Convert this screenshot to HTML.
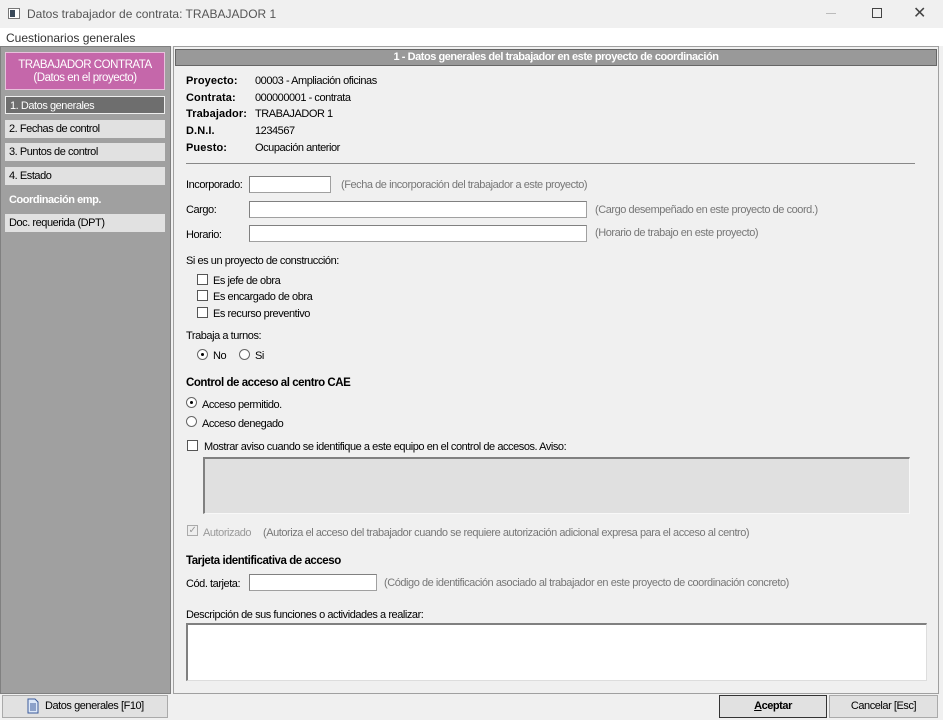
<!DOCTYPE html>
<html><head><meta charset="utf-8">
<style>
*{margin:0;padding:0;box-sizing:border-box}
body{width:943px;height:720px;overflow:hidden;background:#f0f0f0;font-family:"Liberation Sans",sans-serif;font-size:11px;color:#000;position:relative;letter-spacing:-0.45px}
.a{position:absolute;white-space:nowrap}
.g{color:#777}
.inp{position:absolute;background:#fff;border:1px solid #a0a0a0;border-top-color:#808080;border-left-color:#808080}
.cb{position:absolute;width:11px;height:11px;border:1px solid #555;background:#fff}
.rb{position:absolute;width:11px;height:11px;border:1px solid #666;border-radius:50%;background:#fff}
.rb.on::after{content:"";position:absolute;left:3px;top:3px;width:3px;height:3px;border-radius:50%;background:#000}
.nav{position:absolute;left:5px;width:160px;height:18px;background:#e1e1e1;padding-left:4px;line-height:18px}
b{font-weight:bold;letter-spacing:0.1px}
</style></head><body>
<div class="a" style="left:0;top:0;width:943px;height:28px;background:#f0f0f0"></div>
<div class="a" style="left:8px;top:8px;width:12px;height:11px;border:1px solid #777;background:#fff"><div style="position:absolute;left:1px;top:1px;width:5px;height:7px;background:#3a4a5a"></div></div>
<div class="a" style="left:27px;top:7px;font-size:12px;color:#555;letter-spacing:0">Datos trabajador de contrata: TRABAJADOR 1</div>
<div class="a" style="left:826px;top:13px;width:10px;height:1px;background:#bbb"></div>
<div class="a" style="left:872px;top:8px;width:10px;height:10px;border:1px solid #444"></div>
<div class="a" style="left:913px;top:3px;font-size:16px;color:#444;letter-spacing:0">✕</div>
<div class="a" style="left:0;top:28px;width:943px;height:18px;background:#fff"></div>
<div class="a" style="left:6px;top:31px;font-size:12px;color:#333;letter-spacing:0">Cuestionarios generales</div>
<div class="a" style="left:0;top:46px;width:171px;height:648px;background:#a0a0a0;border:1px solid #808080"></div>
<div class="a" style="left:5px;top:52px;width:160px;height:38px;background:#c567aa;border:1px solid #e8c0dc;color:#fff;text-align:center;line-height:13px;padding-top:6px;font-size:11.5px">TRABAJADOR CONTRATA<br>(Datos en el proyecto)</div>
<div class="nav" style="top:96px;background:#6e6e6e;color:#fff;border:1px solid #eee">1. Datos generales</div>
<div class="nav" style="top:120px">2. Fechas de control</div>
<div class="nav" style="top:143px">3. Puntos de control</div>
<div class="nav" style="top:167px">4. Estado</div>
<div class="a" style="left:9px;top:194px;color:#fff;font-weight:bold">Coordinación emp.</div>
<div class="nav" style="top:214px">Doc. requerida (DPT)</div>
<div class="a" style="left:173px;top:46px;width:766px;height:648px;background:#f0f0f0;border:1px solid #a0a0a0"></div>
<div class="a" style="left:175px;top:49px;width:762px;height:17px;background:#999;border:1px solid #666;color:#fff;font-weight:bold;text-align:center;line-height:15px">1 - Datos generales del trabajador en este proyecto de coordinación</div>
<div class="a" style="left:186px;top:75px"><b>Proyecto:</b></div><div class="a" style="left:255px;top:75px">00003 - Ampliación oficinas</div>
<div class="a" style="left:186px;top:92px"><b>Contrata:</b></div><div class="a" style="left:255px;top:92px">000000001 - contrata</div>
<div class="a" style="left:186px;top:108px"><b>Trabajador:</b></div><div class="a" style="left:255px;top:108px">TRABAJADOR 1</div>
<div class="a" style="left:186px;top:125px"><b>D.N.I.</b></div><div class="a" style="left:255px;top:125px">1234567</div>
<div class="a" style="left:186px;top:142px"><b>Puesto:</b></div><div class="a" style="left:255px;top:142px">Ocupación anterior</div>
<div class="a" style="left:186px;top:163px;width:729px;height:1px;background:#888"></div>
<div class="a" style="left:186px;top:179px">Incorporado:</div>
<div class="inp" style="left:249px;top:176px;width:82px;height:17px"></div>
<div class="a g" style="left:341px;top:179px">(Fecha de incorporación del trabajador a este proyecto)</div>
<div class="a" style="left:186px;top:204px">Cargo:</div>
<div class="inp" style="left:249px;top:201px;width:338px;height:17px"></div>
<div class="a g" style="left:595px;top:204px">(Cargo desempeñado en este proyecto de coord.)</div>
<div class="a" style="left:186px;top:229px">Horario:</div>
<div class="inp" style="left:249px;top:225px;width:338px;height:17px"></div>
<div class="a g" style="left:595px;top:227px">(Horario de trabajo en este proyecto)</div>
<div class="a" style="left:186px;top:255px">Si es un proyecto de construcción:</div>
<div class="cb" style="left:197px;top:274px"></div><div class="a" style="left:213px;top:275px">Es jefe de obra</div>
<div class="cb" style="left:197px;top:290px"></div><div class="a" style="left:213px;top:291px">Es encargado de obra</div>
<div class="cb" style="left:197px;top:307px"></div><div class="a" style="left:213px;top:308px">Es recurso preventivo</div>
<div class="a" style="left:186px;top:330px">Trabaja a turnos:</div>
<div class="rb on" style="left:197px;top:349px"></div><div class="a" style="left:213px;top:350px">No</div>
<div class="rb" style="left:239px;top:349px"></div><div class="a" style="left:255px;top:350px">Si</div>
<div class="a" style="left:186px;top:377px;font-weight:bold;font-size:11.5px">Control de acceso al centro CAE</div>
<div class="rb on" style="left:186px;top:397px"></div><div class="a" style="left:202px;top:399px">Acceso permitido.</div>
<div class="rb" style="left:186px;top:416px"></div><div class="a" style="left:202px;top:418px">Acceso denegado</div>
<div class="cb" style="left:187px;top:440px"></div><div class="a" style="left:204px;top:441px">Mostrar aviso cuando se identifique a este equipo en el control de accesos. Aviso:</div>
<div class="a" style="left:203px;top:457px;width:707px;height:57px;background:#e0e0e0;border:1px solid #f8f8f8;border-top:2px solid #808080;border-left:2px solid #808080"></div>
<div class="cb" style="left:187px;top:525px;border-color:#aaa;background:#eee;color:#999;font-size:10px;line-height:9px;text-align:center">✓</div>
<div class="a g" style="left:203px;top:527px;color:#999">Autorizado</div>
<div class="a g" style="left:263px;top:527px">(Autoriza el acceso del trabajador cuando se requiere autorización adicional expresa para el acceso al centro)</div>
<div class="a" style="left:186px;top:555px;font-weight:bold;font-size:11.5px">Tarjeta identificativa de acceso</div>
<div class="a" style="left:186px;top:578px">Cód. tarjeta:</div>
<div class="inp" style="left:249px;top:574px;width:128px;height:17px"></div>
<div class="a g" style="left:384px;top:577px">(Código de identificación asociado al trabajador en este proyecto de coordinación concreto)</div>
<div class="a" style="left:186px;top:609px">Descripción de sus funciones o actividades a realizar:</div>
<div class="inp" style="left:186px;top:623px;width:741px;height:58px;border:1px solid #ddd;border-top:2px solid #808080;border-left:2px solid #808080"></div>
<div class="a" style="left:2px;top:695px;width:166px;height:23px;background:#e1e1e1;border:1px solid #aaa;line-height:21px;padding-left:42px">Datos generales [F10]</div>
<svg class="a" style="left:27px;top:698px" width="12" height="16" viewBox="0 0 12 16"><path d="M1 1h7l3 3v11H1z" fill="#dde8f8" stroke="#3a5a9a"/><path d="M3 6h6M3 8h6M3 10h6M3 12h6" stroke="#3a5a9a"/></svg>
<div class="a" style="left:719px;top:695px;width:108px;height:23px;background:#e1e1e1;border:1px solid #333;text-align:center;line-height:21px;font-weight:bold"><u>A</u>ceptar</div>
<div class="a" style="left:829px;top:695px;width:109px;height:23px;background:#e1e1e1;border:1px solid #aaa;text-align:center;line-height:21px">Cancelar [Esc]</div>
</body></html>
